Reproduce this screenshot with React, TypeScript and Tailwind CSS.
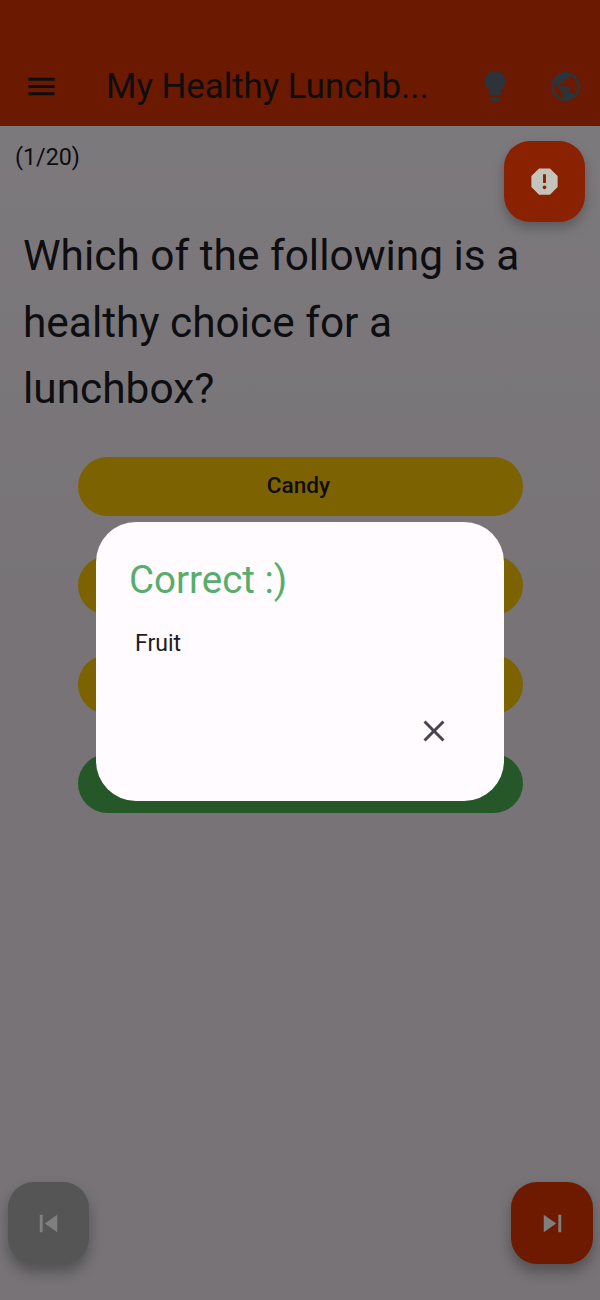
import { MdMenu, MdLightbulb, MdPublic, MdReport, MdSkipPrevious, MdSkipNext, MdClose } from 'react-icons/md';

// Only the first label shows in the picture, the dialog covers the others
const ANSWERS = [
    { id: 1, label: 'Candy', color: 'bg-[#f9c400]' },
    { id: 2, label: '', color: 'bg-[#f9c400]' },
    { id: 3, label: '', color: 'bg-[#f9c400]' },
    { id: 4, label: '', color: 'bg-[#4caf50]' },
];

function App() {
    return (
        <div className="relative w-[600px] h-[1300px] overflow-hidden bg-linear-to-b from-[#fcf6fe] to-[#eee6ee] to-50% flex flex-col font-['Roboto',sans-serif] text-[#1c1b1f]">
            {/* App bar */}
            <header className="h-[126px] shrink-0 bg-[#d63200] flex items-end pb-[15px]">
                <div className="w-[82px] h-[50px] flex items-center justify-center">
                    <MdMenu size={35} className="text-[#1c1b1f]" />
                </div>
                <h1 className="w-[381px] pl-6 h-[50px] text-[34.8px] leading-[50px] truncate">My Healthy Lunchb...</h1>
                <div className="w-[64px] h-[50px] flex items-center justify-center">
                    <MdLightbulb size={36} className="text-[#5a6672]" />
                </div>
                <div className="ml-[3px] w-[70px] h-[50px] flex items-center justify-center">
                    <MdPublic size={35} className="text-[#5a6672]" />
                </div>
            </header>

            {/* Progress + report */}
            <div className="flex justify-between items-start pt-[15px] pl-[15px] pr-[15px]">
                <span className="text-[23.3px] leading-[32px]">(1/20)</span>
                {/* Sits above the scrim, it stays brighter than the rest in the picture */}
                <button className="relative z-10 w-[81px] h-[81px] rounded-[26px] bg-[#8a2100] flex items-center justify-center shadow-[0_6px_12px_rgba(0,0,0,0.25)]">
                    <MdReport size={35} className="text-[#c4c4bc]" />
                </button>
            </div>

            {/* Question */}
            <p className="pt-px px-[23px] text-[42.4px] leading-[66.5px]">
                Which of the following is a healthy choice for a lunchbox?
            </p>

            {/* Answers */}
            <div className="mt-[34px] ml-[78px] mr-[77px] flex flex-col gap-10">
                {ANSWERS.map(answer => (
                    <button
                        key={answer.id}
                        className={`h-[59px] pr-1 rounded-full text-[22.6px] font-medium text-[#1c1b1f] ${answer.color}`}
                    >
                        {answer.label}
                    </button>
                ))}
            </div>

            {/* Prev / next */}
            <div className="mt-auto flex justify-between pl-2 pr-[7px] pb-9">
                <button className="w-[81px] h-[82px] rounded-[26px] bg-[#aaaaaa] flex items-center justify-center shadow-[0_8px_14px_rgba(0,0,0,0.3)]">
                    <MdSkipPrevious size={35} className="text-[#ffffff]" />
                </button>
                <button className="w-[82px] h-[82px] rounded-[26px] bg-[#da3400] flex items-center justify-center shadow-[0_8px_14px_rgba(0,0,0,0.3)]">
                    <MdSkipNext size={35} className="text-[#ffffff]" />
                </button>
            </div>

            {/* Scrim */}
            <div className="absolute inset-0 bg-black/50"></div>

            {/* Result dialog */}
            <div className="absolute left-[96px] top-[522px] w-[408px] h-[279px] rounded-[40px] bg-[#fffbfe] flex flex-col">
                <h2 className="pl-[33px] pt-[33px] text-[38.5px] leading-[50px] text-[#57ad6b]">Correct :)</h2>
                <p className="pl-[39px] pt-[22px] text-[23px] leading-[34px]">Fruit</p>
                <div className="mt-auto flex justify-end pr-[52px] pb-[52px]">
                    <MdClose size={36} className="text-[#49454f]" />
                </div>
            </div>
        </div>
    );
}

export default App;
